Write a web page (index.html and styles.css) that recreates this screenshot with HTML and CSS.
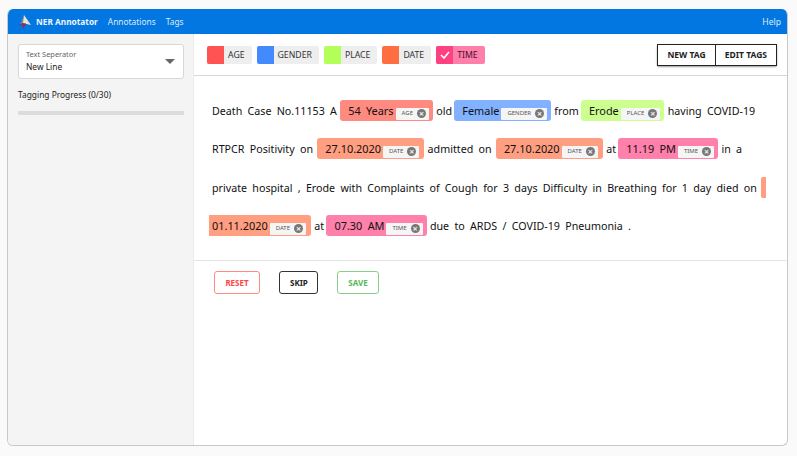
FILE: index.html
```html
<!DOCTYPE html>
<html lang="en">
<head>
<meta charset="utf-8">
<title>NER Annotator</title>
<link rel="stylesheet" href="styles.css">
</head>
<body>
<div class="window">
  <nav class="nav">
    <svg class="logo" width="16" height="16" viewBox="0 0 16 16"><path d="M7 1 L14 11 L5 9 Z" fill="#e9e3d0"/><path d="M7 1 L3 10 L6 9 Z" fill="#6d7fa8"/><path d="M5 9 L9 10 L6 15 Z" fill="#8c2f5e"/><path d="M2 11 L9 10" stroke="#8c2f5e" stroke-width="1"/></svg>
    <span class="brand">NER Annotator</span>
    <a class="nav-link">Annotations</a>
    <a class="nav-link">Tags</a>
    <a class="nav-link help">Help</a>
  </nav>
  <div class="body">
    <aside class="side">
      <div class="select">
        <div>
          <div class="select-label">Text Seperator</div>
          <div class="select-value">New Line</div>
        </div>
        <span class="caret"></span>
      </div>
      <div class="progress-label">Tagging Progress (0/30)</div>
      <div class="progress"></div>
    </aside>
    <main class="main">
      <div class="tagbar">
        <div class="chips">
          <div class="chip"><span class="swatch age"></span><span class="chip-text">AGE</span></div>
          <div class="chip"><span class="swatch gender"></span><span class="chip-text">GENDER</span></div>
          <div class="chip"><span class="swatch place"></span><span class="chip-text">PLACE</span></div>
          <div class="chip"><span class="swatch date"></span><span class="chip-text">DATE</span></div>
          <div class="chip chip-on"><span class="swatch time"><svg width="10" height="8" viewBox="0 0 10 8"><path d="M1 4 L4 7 L9 1" fill="none" stroke="#fff" stroke-width="1.6"/></svg></span><span class="chip-text">TIME</span></div>
        </div>
        <div class="btn-group"><button class="tool-btn">NEW TAG</button><button class="tool-btn">EDIT TAGS</button></div>
      </div>
      <div class="text">
        <div class="line">Death Case No.11153 A <mark class="m age-m">54 Years<span class="lab">AGE<i class="x">×</i></span></mark> old <mark class="m gender-m">Female<span class="lab">GENDER<i class="x">×</i></span></mark> from <mark class="m place-m">Erode<span class="lab">PLACE<i class="x">×</i></span></mark> having COVID-19</div>
        <div class="line">RTPCR Positivity on <mark class="m date-m">27.10.2020<span class="lab">DATE<i class="x">×</i></span></mark> admitted on <mark class="m date-m">27.10.2020<span class="lab">DATE<i class="x">×</i></span></mark> at <mark class="m time-m">11.19 PM<span class="lab">TIME<i class="x">×</i></span></mark> in a</div>
        <div class="line">private hospital , Erode with Complaints of Cough for 3 days Difficulty in Breathing for 1 day died on <mark class="m date-m stub"></mark></div>
        <div class="line line-last"><mark class="m date-m cont">01.11.2020<span class="lab">DATE<i class="x">×</i></span></mark> at <mark class="m time-m">07.30 AM<span class="lab">TIME<i class="x">×</i></span></mark> due to ARDS / COVID-19 Pneumonia .</div>
      </div>
      <div class="actions">
        <button class="act reset">RESET</button>
        <button class="act skip">SKIP</button>
        <button class="act save">SAVE</button>
      </div>
    </main>
  </div>
</div>
</body>
</html>
```

FILE: styles.css
```css
html, body { margin: 0; padding: 0; }
body {
  width: 797px;
  height: 456px;
  background: #fafafa;
  font-family: "Noto Sans", "Open Sans", sans-serif;
  color: #111;
  padding: 9px 9px 10px 7px;
  box-sizing: border-box;
  overflow: hidden;
}
.window {
  height: 437px;
  border: 1px solid #c8c8c8;
  border-top: 0;
  border-radius: 6px;
  background: #fff;
  overflow: hidden;
  display: flex;
  flex-direction: column;
  box-sizing: border-box;
}
.nav {
  height: 25px;
  flex: none;
  background: #0277e2;
  display: flex;
  align-items: center;
  padding: 0 6px 0 9px;
  color: #dcebfb;
  font-size: 8.4px;
}
.logo { flex: none; margin-right: 3px; }
.brand { font-weight: 700; color: #eef5fd; margin-right: 10px; font-size: 8.3px; }
.nav-link { margin-right: 10px; }
.help { margin-left: auto; margin-right: 0; font-size: 8.6px; }
.body { flex: 1; display: flex; min-height: 0; }
.side {
  width: 186px;
  flex: none;
  box-sizing: border-box;
  background: #f4f4f4;
  border-right: 1px solid #ebebeb;
  padding: 10px 9px 0 10px;
}
.select {
  height: 35px;
  box-sizing: border-box;
  background: #fff;
  border: 1px solid #d8d8d8;
  border-radius: 3px;
  padding: 0 8px 0 7px;
  display: flex;
  align-items: center;
  justify-content: space-between;
}
.select-label { font-size: 7.4px; line-height: 11px; color: #666; margin-top: -1px; }
.select-value { font-size: 8.4px; line-height: 13px; color: #222; }
.caret {
  width: 0; height: 0;
  border-left: 5px solid transparent;
  border-right: 5px solid transparent;
  border-top: 5px solid #666;
}
.progress-label { font-size: 8.4px; line-height: 12px; margin-top: 10px; color: #222; }
.progress { height: 4px; background: #dcdcdc; margin-top: 10px; }
.main { flex: 1; min-width: 0; }
.tagbar {
  height: 42px;
  box-sizing: border-box;
  border-bottom: 1px solid #d8d8d8;
  display: flex;
  align-items: center;
  justify-content: space-between;
  padding: 0 10px 0 13px;
}
.chips { display: flex; gap: 5px; }
.chip {
  height: 18px;
  display: flex;
  align-items: center;
  background: #eeeeee;
  border-radius: 2px;
  overflow: hidden;
  font-size: 8.7px;
  color: #333;
}
.chip-on { background: #ff7eaa; color: #4a1030; }
.swatch {
  width: 17px;
  height: 18px;
  display: flex;
  align-items: center;
  justify-content: center;
}
.chip-text { padding: 1px 7px 0 4px; }
.age { background: #ff5252; }
.gender { background: #448aff; }
.place { background: #b2ff59; }
.date { background: #ff6e40; }
.time { background: #ff4081; }
.btn-group { display: flex; box-shadow: 0 1px 2px rgba(0,0,0,.4); border-radius: 2px; }
.tool-btn {
  height: 22px;
  padding: 0 9px;
  font: 700 8.5px "Noto Sans", sans-serif;
  color: #222;
  background: #fff;
  border: 1px solid #222;
  border-radius: 0;
}
.tool-btn + .tool-btn { border-left: 0; }
.text {
  padding: 16px 0 14px 18px;
  border-bottom: 1px solid #e4e4e4;
  font-size: 10.7px;
  word-spacing: 2.5px;
  color: #111;
}
.line { height: 38.4px; line-height: 38.4px; white-space: nowrap; }
.m {
  display: inline-block;
  height: 21px;
  line-height: 21px;
  border-radius: 3px;
  padding: 0 5px 0 8px;
  color: #111;
  font-size: 10.9px;
  vertical-align: baseline;
  margin: 0 -2px 0 -1px;
}
.age-m { background: #ff8a80; margin-left: -2px; padding-right: 4px; }
.gender-m { background: #82b1ff; margin-left: -3px; padding-right: 4px; }
.place-m { background: #ccff90; margin-left: -3px; padding-right: 4px; }
.date-m { background: #ff9e80; }
.time-m { background: #ff80ab; margin-left: -3px; padding-right: 4px; }
.stub { width: 5px; padding: 0; margin-left: -1px; border-radius: 2px 0 0 2px; vertical-align: -6px; }
.line-last { margin-left: -3px; }
.cont { padding-left: 3px; border-radius: 0 3px 3px 0; margin-left: 0; }
.lab {
  display: inline-flex;
  align-items: center;
  gap: 4px;
  height: 12px;
  margin-left: 2px;
  padding: 0 3px 0 6px;
  background: #f5f5f5;
  border-radius: 1px;
  font-size: 6px;
  color: #555;
  word-spacing: 0;
}
.x {
  width: 9px; height: 9px;
  line-height: 9px;
  border-radius: 50%;
  background: #777;
  color: #eee;
  font-style: normal;
  font-weight: 700;
  font-size: 9px;
  text-align: center;
}
.actions { display: flex; padding: 10px 0 0 20px; gap: 19px; }
.act {
  height: 23px;
  padding: 0 10px;
  background: #fff;
  border-radius: 3px;
  font: 700 8px "Noto Sans", sans-serif;
  border: 1px solid;
}
.reset { color: #f44; border-color: #ff8a80; width: 46px; }
.skip { color: #222; border-color: #333; width: 39px; }
.save { color: #55b85a; border-color: #88d08c; width: 42px; }
```
